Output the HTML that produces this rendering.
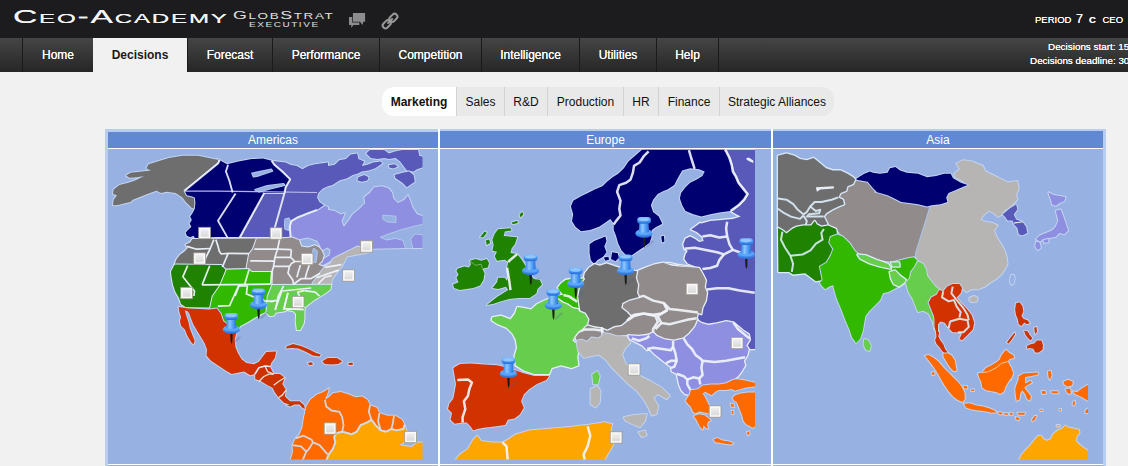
<!DOCTYPE html>
<html>
<head>
<meta charset="utf-8">
<title>CEO-Academy GlobStrat Executive</title>
<style>
html,body{margin:0;padding:0;}
body{width:1128px;height:466px;overflow:hidden;background:#f1f1f1;font-family:"Liberation Sans",Arial,sans-serif;position:relative;}
#top{position:absolute;left:0;top:0;width:1128px;height:38px;background:#1c1c1e;}
#logo{text-shadow:0 0.4px 0 #f4f4f4;position:absolute;left:13px;top:6px;color:#f4f4f4;font-size:18.7px;line-height:22px;letter-spacing:1px;white-space:nowrap;transform-origin:0 50%;transform:scaleX(1.8);}
#logo small{font-size:13.4px;}
#logo2{position:absolute;left:233px;top:8.5px;color:#e0e0e0;font-size:11px;line-height:13px;letter-spacing:1px;white-space:nowrap;transform-origin:0 50%;transform:scaleX(1.62);}
#logo2 small{font-size:8.3px;}
#logo3{position:absolute;left:249px;top:21px;color:#e0e0e0;font-size:6.5px;line-height:8px;letter-spacing:1px;white-space:nowrap;transform-origin:0 50%;transform:scaleX(1.54);}
#period{text-shadow:0 0 0.5px #fff;position:absolute;left:1035px;top:13.600px;color:#fff;font-size:9.5px;line-height:12px;white-space:nowrap;}
#period span{position:absolute;top:0}
#period b{font-size:12.5px;font-weight:normal;position:absolute;top:-1px;left:41px}
#period .c{font-size:9.5px;font-weight:bold;left:54px}
#nav{position:absolute;left:0;top:38px;width:1128px;height:34px;background:linear-gradient(#454545,#262626);}
#nav a{position:absolute;top:0;height:34px;line-height:34px;color:#fff;font-size:12px;text-align:center;text-decoration:none;border-left:1px solid #1a1a1a;box-sizing:border-box;text-shadow:0 0 0.5px #fff;}
#nav a.on{background:#f1f1f1;color:#1a1a1a;font-weight:bold;text-shadow:none;border-left:none}
#dl{position:absolute;left:0;top:40px;color:#fff;font-size:9.9px;line-height:14px;white-space:nowrap;text-shadow:0 0 0.6px #fff;}
#dl div{position:absolute;}
#tabs{position:absolute;left:382px;top:87px;height:29px;width:452px;border-radius:12px;background:#e9e9e9;overflow:hidden;}
#tabs span{position:absolute;top:0;height:29px;line-height:31px;font-size:12px;color:#111;text-align:center;border-left:1px solid #d2d2d2;box-sizing:border-box;}
#tabs span.on{background:#fff;font-weight:bold;border-left:none;}
#panel{position:absolute;left:105px;top:129px;width:1001px;height:340px;background:#b9ceee;}
.hd{position:absolute;top:3px;height:16px;background:#6189d3;color:#fff;font-size:12px;line-height:16px;text-align:center;}
.sea{position:absolute;top:20px;height:320px;background:#96b1e2;}
.wl{position:absolute;background:#fff;}
svg{position:absolute;left:0;top:0;}
</style>
</head>
<body>
<div id="top">
 <div id="logo">C<small>EO</small>-A<small>CADEMY</small></div>
 <div id="logo2">G<small>LOB</small>S<small>TRAT</small></div>
 <div id="logo3">EXECUTIVE</div>
 <svg width="70" height="38" style="left:340px;top:0" viewBox="340 0 70 38">
  <path d="M349 17h10.300v8.100h-6l-2 2.900v-2.900h-2.300z" fill="#8c8c8e"/>
  <path d="M352.200 12.300h13.600v10.100h-2.500v3.300l-3.300-3.300h-7.800z" fill="#1c1c1e"/>
  <path d="M352.900 13h12.200v8.700h-1.800l-0.800 3.200l-2.500-3.200h-7.100z" fill="#8c8c8e"/>
  <g fill="none" stroke="#979797" stroke-width="2">
   <rect x="-4.500" y="-2.800" width="9" height="5.600" rx="2.800" transform="translate(393.400,17.800) rotate(-45)"/>
   <rect x="-4.500" y="-2.800" width="9" height="5.600" rx="2.800" transform="translate(386.700,24.300) rotate(-45)"/>
   <path d="M388 23.100L392.200 19" stroke-linecap="round" stroke="#a0a0a0" stroke-width="1.800"/>
  </g>
 </svg>
 <div id="period"><span style="left:0">PERIOD</span><b>7</b><span class="c">C</span><span style="left:67.500px">CEO</span></div>
</div>
<div id="nav">
 <a style="left:22px;width:71px">Home</a>
 <a class="on" style="left:93px;width:94px">Decisions</a>
 <a style="left:187px;width:85px">Forecast</a>
 <a style="left:272px;width:107px">Performance</a>
 <a style="left:379px;width:102px">Competition</a>
 <a style="left:481px;width:98px">Intelligence</a>
 <a style="left:579px;width:77px">Utilities</a>
 <a style="left:656px;width:62px">Help</a>
 <a style="left:718px;width:2px"></a>
</div>
<div id="dl"><div style="top:0;left:1048px">Decisions start: 15</div><div style="top:14px;left:1030px">Decisions deadline: 30</div></div>
<div id="tabs">
 <span class="on" style="left:0;width:74px">Marketing</span>
 <span style="left:74px;width:48px">Sales</span>
 <span style="left:122px;width:43px">R&amp;D</span>
 <span style="left:165px;width:76px">Production</span>
 <span style="left:241px;width:35px">HR</span>
 <span style="left:276px;width:61px">Finance</span>
 <span style="left:337px;width:115px">Strategic Alliances</span>
</div>
<div id="panel">
 <div class="hd" style="left:3px;width:330px">Americas</div>
 <div class="hd" style="left:335px;width:331px;top:2px;height:17px;line-height:18px">Europe</div>
 <div class="hd" style="left:668px;width:330px;top:2px;height:17px;line-height:18px">Asia</div>
 <div class="sea" style="left:3px;width:330px"></div>
 <div class="sea" style="left:335px;width:331px"></div>
 <div class="sea" style="left:668px;width:330px"></div>
 <div class="wl" style="left:3px;top:19px;width:995px;height:1px"></div>
 <div class="wl" style="left:333px;top:0;width:2px;height:340px"></div>
 <div class="wl" style="left:666px;top:0;width:2px;height:340px"></div>
 <div class="wl" style="left:3px;top:335px;width:995px;height:1px"></div>
</div>
<svg id="map" width="1128" height="466" viewBox="0 0 1128 466">
<defs>
<clipPath id="cA"><rect x="108" y="149" width="314.500" height="310.500"/></clipPath>
<clipPath id="cE"><rect x="440" y="149" width="315" height="310.500"/></clipPath>
<clipPath id="cS"><rect x="773" y="149" width="315" height="310.500"/></clipPath>
<linearGradient id="mk" x1="0" y1="0" x2="0" y2="1"><stop offset="0" stop-color="#efefef"/><stop offset="1" stop-color="#d9d9d9"/></linearGradient>
<radialGradient id="pg" cx="0.4" cy="0.3" r="0.8"><stop offset="0" stop-color="#9ccaff"/><stop offset="0.6" stop-color="#3d8ef0"/><stop offset="1" stop-color="#1f62c8"/></radialGradient>
</defs>
<defs><linearGradient id="pn" x1="0" y1="0" x2="1" y2="0"><stop offset="0" stop-color="#3b86ea"/><stop offset="0.35" stop-color="#8cc6ff"/><stop offset="0.7" stop-color="#4a98f6"/><stop offset="1" stop-color="#2c6fd6"/></linearGradient>
<linearGradient id="pf" x1="0" y1="0" x2="0" y2="1"><stop offset="0" stop-color="#7bbcff"/><stop offset="0.55" stop-color="#4594f5"/><stop offset="1" stop-color="#2a6cd4"/></linearGradient>
<g id="pin">
<path d="M0.300 -0.300L7 -7.500L10 -7L3.500 -1Z" fill="#55607a" fill-opacity="0.250"/>
<path d="M-1.400 -11L1.100 -11L0.900 -3L0 0L-0.900 -3Z" fill="#1c1c1c"/>
<ellipse cx="-0.200" cy="-14.600" rx="8.700" ry="4.400" fill="url(#pf)"/>
<ellipse cx="-0.200" cy="-15.700" rx="7.600" ry="2.900" fill="#5ca6fa"/>
<path d="M-4.700 -25.500L4.300 -25.500L4.900 -16.300C3 -14.800-3.300 -14.800-5.300 -16.300Z" fill="url(#pn)"/>
<rect x="-7" y="-31" width="13.700" height="6.800" rx="3.300" ry="3" fill="url(#pf)"/>
<ellipse cx="-0.400" cy="-28.600" rx="5.600" ry="1.800" fill="#8ec6ff"/>
</g></defs>
<g clip-path="url(#cA)">
<polygon points="218,163.6 218,159.1 219.8,160.3 198.1,155.8 182.4,155.8 168.8,158 159.8,160.7 148.6,164.3 146.3,168.2 150.8,170.4 141.8,171.5 130.5,172.7 126,175.6 129.4,177.8 137.3,177.2 144.1,176 135,180.5 128.3,182.8 119.3,185.1 113.6,189.6 113,194.1 117,195.2 113.6,199.7 113,205.3 118.1,204.9 126,203.1 130.5,202 132.8,199.7 141.8,196.3 147.4,194.1 156.4,190.7 161,192.9 166.6,191.8 175.6,192.9 182.4,197.4 185.7,202 189.1,205.3 191.8,208 194.8,208.7 195.4,203.1 194.8,197.4 191.4,196.3 186.9,195.2 184.6,190.7" fill="#6e6e6e" stroke="#c3d4f0" stroke-width="2" stroke-linejoin="round" paint-order="stroke"/>
<polygon points="317.1,209.8 323.9,205.3 328,207.1 328,209.8 334.8,211 340.4,214.3 344.9,213.2 341.5,221.1 343.8,226.7 348.3,221.1 352.8,214.3 359.5,208.7 365.2,203.1 364.1,197.4 369.7,192.9 374.2,187.3 382.1,186.2 388.8,188.4 392.2,192.9 393.3,198.6 397.9,203.1 404.6,199.7 408,195.2 410.2,200.8 412.5,207.6 417,214.3 423.8,216.6 423.8,248.1 406.9,248.1 373,248.7 368.9,252 361,247.5 357.6,246.4 350.9,249.8 344.1,253.2 337.4,256.5 332.9,258.8 328.3,262.2 322.7,265.1 317.1,264.4 319.3,261.1 323.8,258.8 329.5,255.4 330.6,249.8 327.2,247.5 321.6,250.9 319.3,249.8 320.5,246.4 317.1,240.8 308.1,237.4 300.2,239 299.1,240.3 292.3,237.4 287.8,238.1 290.6,237.6 289.7,226.7 291.2,221.1 296.9,217.7 308.1,213.2" fill="#8f8fe2" stroke="#c3d4f0" stroke-width="2" stroke-linejoin="round" paint-order="stroke"/>
<polygon points="423.8,224.5 413.6,226.7 402.4,229.7 391.1,233.5 381,237.3 386.6,239.6 395.6,238 403.5,240.3 405.7,248.1 412.5,248.1 410.2,239.1 414.8,233.5 423.8,234.6" fill="#96b1e2" stroke="#b9cbee" stroke-width="1.6" stroke-linejoin="round" paint-order="stroke"/>
<polygon points="383.2,215.5 395.6,216.6 395.6,222.2 387.7,221.6 383.2,218.9" fill="#96b1e2" stroke="#b9cbee" stroke-width="1.6" stroke-linejoin="round" paint-order="stroke"/>
<polygon points="271.6,160.7 276.6,161.4 285.6,162.5 290.1,164.8 296.9,165.9 302.5,169.3 308.1,165.9 314.9,164.3 328,162.5 328,165.9 334.8,164.8 339.3,160.3 346,159.1 350.5,154.6 357.3,153.5 358.4,159.1 364.1,161.4 361.8,165.9 367.4,164.8 373.1,162.5 381,161.4 382.1,163.6 375.3,168.2 368.6,170.4 361.8,171.5 357.3,173.8 352.8,174.9 347.2,178.3 339.3,180.5 332.5,185.1 328,186.2 328,186.2 322.8,188.4 318.3,192.9 317.1,197.4 319.4,202 323.9,205.3 317.1,209.8 308.1,213.2 296.9,217.7 291.2,221.1 289.7,226.7 290.6,238 239.4,238 264.2,192.9 284.5,192.9 285.6,187.3 290.1,179.4 287.9,177.2 282.2,171.5 274.3,164.8" fill="#5959b9" stroke="#c3d4f0" stroke-width="2" stroke-linejoin="round" paint-order="stroke"/>
<polygon points="358.4,177.2 364.1,174.9 368.6,177.2 367.4,180.5 361.8,181.7 357.3,180.5" fill="#5959b9" stroke="#c3d4f0" stroke-width="2" stroke-linejoin="round" paint-order="stroke"/>
<polygon points="366.3,153.5 369.7,150.1 384.3,150.1 388.8,153.5 395.6,151.3 402.4,150.1 418.1,150.1 419.3,155.8 423.8,156.9 423.8,167 417,169.3 413.6,171.5 406.9,170.4 403.5,165.9 400.1,161.4 395.6,158 388.8,159.1 384.3,158 377.6,159.1 370.8,158" fill="#5959b9" stroke="#c3d4f0" stroke-width="2" stroke-linejoin="round" paint-order="stroke"/>
<polygon points="394.5,174.9 402.4,172.7 409.1,171.5 413.6,174.9 414.8,181.7 411.4,183.9 406.9,187.3 402.4,182.8 395.6,178.3" fill="#5959b9" stroke="#c3d4f0" stroke-width="2" stroke-linejoin="round" paint-order="stroke"/>
<polygon points="388.8,165.2 394.5,164.3 397.9,166.6 393.3,168.4 389.3,167.5" fill="#5959b9" stroke="#c3d4f0" stroke-width="2" stroke-linejoin="round" paint-order="stroke"/>
<polygon points="285.1,219.3 289,218.4 290.6,223.4 288.3,230.1 285.1,229 284.7,224.5" fill="#96b1e2" stroke="#b9cbee" stroke-width="1.6" stroke-linejoin="round" paint-order="stroke"/>
<polygon points="184.6,190.7 218,163.6 219.8,160.3 227,164.3 238.3,161.4 251.8,159.1 263.1,158.5 271.6,160.7 274.3,164.8 282.2,171.5 287.9,177.2 290.1,179.4 285.6,187.3 284.5,192.9 264.2,192.9 239.4,238 218,238 198.1,238.7 194.8,238 193.6,235.8 190.2,237.3 186.9,235.8 185.7,232.4 188,230.1 191.4,226.7 189.6,223.4 191.8,220 190.2,216.6 192.5,213.2 194.8,208.7 195.4,203.1 194.8,197.4 191.4,196.3 186.9,195.2" fill="#000070" stroke="#c3d4f0" stroke-width="2" stroke-linejoin="round" paint-order="stroke"/>
<polygon points="252,173.3 271.4,169.3 272.5,171.1 259,175.6 253.4,176.7" fill="#96b1e2" stroke="#b9cbee" stroke-width="1.6" stroke-linejoin="round" paint-order="stroke"/>
<polygon points="255,189.8 267.3,185.7 283.6,183.7 284.7,185.3 269.4,188.9 259,191.8" fill="#96b1e2" stroke="#b9cbee" stroke-width="1.6" stroke-linejoin="round" paint-order="stroke"/>
<polyline points="184.6,191.1 218,191.1 317.1,192.5" fill="none" stroke="#c9c9ee" stroke-width="1.2" stroke-opacity="0.9" stroke-linejoin="round"/>
<polyline points="228.1,164.8 225.9,171.5 229.3,180.5 231.5,188.4 232.6,192.5" fill="none" stroke="#eef3fb" stroke-width="1.9" stroke-opacity="0.9" stroke-linejoin="round"/>
<polyline points="235.6,193.4 218,220.7 227.5,237.6" fill="none" stroke="#eef3fb" stroke-width="1.9" stroke-opacity="0.9" stroke-linejoin="round"/>
<polyline points="284.5,192.9 272.1,237.6" fill="none" stroke="#eef3fb" stroke-width="1.9" stroke-opacity="0.9" stroke-linejoin="round"/>
<polyline points="271.6,160.7 274.3,164.8 282.2,171.5 287.9,177.2 290.1,179.4 285.6,187.3 284.5,192.9" fill="none" stroke="#eef3fb" stroke-width="1.9" stroke-opacity="0.9" stroke-linejoin="round"/>
<polyline points="264.2,192.9 239.4,238" fill="none" stroke="#eef3fb" stroke-width="1.9" stroke-opacity="0.9" stroke-linejoin="round"/>
<polyline points="317.1,209.8 308.1,213.2 296.9,217.7 291.2,221.1 289.7,226.7 290.6,237.6" fill="none" stroke="#eef3fb" stroke-width="1.9" stroke-opacity="0.9" stroke-linejoin="round"/>
<polyline points="184.6,190.7 218,163.6 219.8,160.3" fill="none" stroke="#eef3fb" stroke-width="1.9" stroke-opacity="0.9" stroke-linejoin="round"/>
<polyline points="198.1,238.7 218,238 290.6,238" fill="none" stroke="#eef3fb" stroke-width="1.9" stroke-opacity="0.9" stroke-linejoin="round"/>
<polygon points="192.3,239 190,242.4 185.5,244.6 187.8,248 184.4,251.4 179.9,254.8 176.5,259.3 174.3,264.9 175.3,264.6 221.3,265 223.4,268.8 246.4,268.6 249.1,254 252.9,249.2 256.8,238.6" fill="#6e6e6e" stroke="#dde7f7" stroke-width="2" stroke-linejoin="round" paint-order="stroke"/>
<polygon points="256.8,238.6 252.9,249.2 249.1,254 246.4,268.6 249.5,269.1 251.6,271.9 272.2,272.1 271.5,284.2 270,285 312.6,284.7 312.6,283.2 316.7,277.7 322.2,270.1 325,266.7 330.6,263.3 323.8,266.7 318.2,264.4 322,261.1 323.8,255.4 322,250.9 319.3,247.5 314.8,245.3 308.1,247.5 301.3,246.4 299.1,240.3 292.3,237.4 279.9,238.5" fill="#928b8b" stroke="#dde7f7" stroke-width="2" stroke-linejoin="round" paint-order="stroke"/>
<polygon points="313.7,248.7 317.1,251.6 315.7,262.2 313,262.2 312.1,255.4" fill="#96b1e2" stroke="#b9cbee" stroke-width="1.6" stroke-linejoin="round" paint-order="stroke"/>
<polygon points="330.6,263.3 332.9,258.8 337.4,256.5 344.1,253.2 350.9,249.8 357.6,246.4 361,247.5 368.9,252 364.4,253.2 347,256.4 344.2,261.9 341.5,266.7 338.7,270.1 334.6,275.6 331.8,279.7 331.2,284.7 312.6,284.7 312.6,283.2 316.7,277.7 322.2,270.1 325,266.7" fill="#b7b4b4" stroke="#c3d4f0" stroke-width="2" stroke-linejoin="round" paint-order="stroke"/>
<polygon points="270,285 331.2,284.7 331.2,285.9 330.5,289.4 325,293.5 319.5,296.9 314,300.3 308.5,304.5 305,307.2 304.4,311.3 304.4,319 303.6,324.1 300.2,330 296.8,330 295.7,321.9 296.1,314.1 293.4,311.3 286.5,310 285.1,311.3 275.5,312.7 274.1,315.5 270,316.2 265.5,312 265.5,296 268.1,292.5 271.5,284.2" fill="#66cd4d" stroke="#dde7f7" stroke-width="2" stroke-linejoin="round" paint-order="stroke"/>
<polygon points="225.5,269.8 248.8,269.1 251.6,271.9 272.2,272.1 271.5,284.2 268.1,292.5 266.7,296 265.5,312 265.1,312.3 258.9,315.3 251.5,319.8 245.3,323.5 240.4,325.9 236.7,331.6 231.7,330.9 228,324.7 223.1,321 220.6,313.6 216.9,308.6 209.5,309.4 209.2,307.5 211.7,296 219.3,284.9" fill="#33b800" stroke="#dde7f7" stroke-width="2" stroke-linejoin="round" paint-order="stroke"/>
<polygon points="174.3,264.9 175.3,264.6 221.3,265 225.5,269.8 219.3,284.9 211.7,296 209.2,307.5 190,307.3 185.5,307.1 181,303.9 178.8,297.6 175.4,292 173.1,285.2 171.6,277.3 170.9,271.7" fill="#1f8200" stroke="#dde7f7" stroke-width="2" stroke-linejoin="round" paint-order="stroke"/>
<polygon points="178.6,306.9 188.5,308.6 209.5,309.4 216.9,308.6 220.6,313.6 223.1,321 228,324.7 231.7,330.9 236.7,331.6 234.7,339.5 235.4,346.9 237.9,353.1 241.6,359.3 246.5,363 254,364.2 258.9,361.7 262.6,356.8 266.3,351.9 276.2,351.4 274.9,358 271.2,363 270,366.7 265.1,366.2 258.9,367.9 255.2,374.1 250.2,375.3 244.1,371.6 237.9,372.8 231.7,374.1 225.6,370.4 218.1,365.4 210.7,360.5 206.5,355.6 207,349.4 204.6,343.2 200.9,337 197.2,330.9 193.5,324.7 191,318.5 189.3,313.6 187.3,311.1 184.8,310.4 186,314.8 188.5,322.2 189.8,328.4 192.2,334.6 194.7,340.7 193.5,344.4 191,342 187.3,335.8 184.8,329.6 181.1,325.9 179.9,321 181.1,317.3 179.4,312.3" fill="#d23200" stroke="#c3d4f0" stroke-width="2" stroke-linejoin="round" paint-order="stroke"/>
<polygon points="270,366.7 273.7,374.1 279.9,374.1 284.8,377.8 282.3,384 286,390.1 284.8,396.3 290,401.2 293,401.2 299.6,401.2 304.1,405.2 304.9,409.1 302.3,407.8 299.6,404.4 294.3,404.4 290.3,406.5 286.3,405.2 290,404.9 283.6,402.5 278.6,397.5 274.9,392.6 272.5,387.7 267.5,385.2 261.4,381.5 255.2,379 255.2,374.1 258.9,367.9 265.1,366.2" fill="#cc3300" stroke="#c3d4f0" stroke-width="2" stroke-linejoin="round" paint-order="stroke"/>
<polyline points="255.2,374.1 258.9,367.9 265.1,366.2 270,366.7" fill="none" stroke="#eef3fb" stroke-width="1.3" stroke-opacity="0.9" stroke-linejoin="round"/>
<polyline points="265.1,366.2 267.5,371.6 273.7,374.1" fill="none" stroke="#eef3fb" stroke-width="1.3" stroke-opacity="0.9" stroke-linejoin="round"/>
<polyline points="258.9,381.5 263.8,376.5 268.8,374.1 273.7,374.1" fill="none" stroke="#eef3fb" stroke-width="1.3" stroke-opacity="0.9" stroke-linejoin="round"/>
<polyline points="273.7,385.2 278.6,381.5 284.8,377.8" fill="none" stroke="#eef3fb" stroke-width="1.3" stroke-opacity="0.9" stroke-linejoin="round"/>
<polyline points="278.6,397.5 282.3,395.1 286,390.1" fill="none" stroke="#eef3fb" stroke-width="1.3" stroke-opacity="0.9" stroke-linejoin="round"/>
<polygon points="286.3,346.6 293,344 301,345.9 308.9,349.3 315.6,352.8 320.9,354.6 319.6,356.5 312.9,355.4 306.3,352 298.3,348.5 291.6,348 286.3,348.5" fill="#cc3300" stroke="#c3d4f0" stroke-width="2" stroke-linejoin="round" paint-order="stroke"/>
<polygon points="307.6,362.9 311.6,362.3 313.2,364.5 309.5,365.3" fill="#cc3300" stroke="#c3d4f0" stroke-width="2" stroke-linejoin="round" paint-order="stroke"/>
<polygon points="322.2,361.3 327.6,358.1 336.9,358.1 342.2,361.3 338.2,363.9 331.5,364.5 324.9,363.9" fill="#cc3300" stroke="#c3d4f0" stroke-width="2" stroke-linejoin="round" paint-order="stroke"/>
<polygon points="348.3,362.9 352.6,362.6 352.8,365 348.8,365" fill="#cc3300" stroke="#c3d4f0" stroke-width="2" stroke-linejoin="round" paint-order="stroke"/>
<polygon points="306.3,406.5 310.3,399.8 316.9,394.5 323.6,391.9 328.9,388.4 327.6,393.2 324.9,399.8 328.9,397.2 332.9,393.2 340.9,391.9 348.8,394.5 355.5,397.2 362.1,396.4 367.4,399.8 370.1,405.2 376.8,407.8 379.4,413.1 387.4,415.8 395.4,415.8 402,419.8 404.7,425.1 403.4,429.1 396.7,430.4 391.4,429.1 386.1,431.8 380.7,430.4 375.4,425.1 371.4,419.8 367.4,422.4 360.8,425.1 356.8,431.8 351.5,434.4 347.5,433.1 342.2,431.8 336.9,433.1 334.2,437.1 335.5,442.4 332.9,449 328.9,454.4 326.2,461 290.3,461 293,451.7 292.4,445.1 295.6,438.4 299.6,434.4 302.3,427.8 303.6,419.8 304.9,413.1" fill="#ff6a00" stroke="#c3d4f0" stroke-width="2" stroke-linejoin="round" paint-order="stroke"/>
<polygon points="326.2,461 328.9,454.4 332.9,449 335.5,442.4 334.2,437.1 336.9,433.1 342.2,431.8 347.5,433.1 351.5,434.4 356.8,431.8 360.8,425.1 367.4,422.4 371.4,419.8 375.4,425.1 380.7,430.4 386.1,431.8 391.4,429.1 396.7,430.4 403.4,429.1 404.7,425.1 406.8,431.8 407.9,438.4 403.4,442.4 399.4,445.1 404.7,445.9 411.3,446.9 415.3,444.3 418,442.4 424.6,442.4 424.6,461" fill="#ffa500" stroke="#c3d4f0" stroke-width="2" stroke-linejoin="round" paint-order="stroke"/>
<polyline points="326.2,461 328.9,454.4 332.9,449 335.5,442.4 334.2,437.1 336.9,433.1 342.2,431.8 347.5,433.1 351.5,434.4 356.8,431.8 360.8,425.1 367.4,422.4 371.4,419.8 375.4,425.1 380.7,430.4 386.1,431.8 391.4,429.1 396.7,430.4 403.4,429.1 404.7,425.1" fill="none" stroke="#cfe0f2" stroke-width="1.8" stroke-opacity="0.9" stroke-linejoin="round"/>
<polyline points="324.9,399.8 326.2,406.5 331.5,410.5 339.5,411.8 342.2,417.1 343.5,425.1 342.2,431.8" fill="none" stroke="#cfe0f2" stroke-width="1.8" stroke-opacity="0.9" stroke-linejoin="round"/>
<polyline points="370.1,405.2 368.8,411.8 371.4,419.8" fill="none" stroke="#cfe0f2" stroke-width="1.8" stroke-opacity="0.9" stroke-linejoin="round"/>
<polyline points="379.4,413.1 378.1,421.1 380.7,430.4" fill="none" stroke="#cfe0f2" stroke-width="1.8" stroke-opacity="0.9" stroke-linejoin="round"/>
<polyline points="394,415.8 392.7,423.8 391.4,429.1" fill="none" stroke="#cfe0f2" stroke-width="1.8" stroke-opacity="0.9" stroke-linejoin="round"/>
<polyline points="295.6,438.4 303.6,435.7 311.6,439.7 312.9,442.4 319.6,445.1 327.6,454.4" fill="none" stroke="#cfe0f2" stroke-width="1.8" stroke-opacity="0.9" stroke-linejoin="round"/>
<polyline points="292.4,445.1 301,446.4 306.3,451.7 302.3,461" fill="none" stroke="#cfe0f2" stroke-width="1.8" stroke-opacity="0.9" stroke-linejoin="round"/>
<polyline points="312.9,442.4 308.9,449 306.3,451.7" fill="none" stroke="#cfe0f2" stroke-width="1.8" stroke-opacity="0.9" stroke-linejoin="round"/>
<polyline points="213.8,239.6 210.3,248.5 205.5,258.1 204.9,263.9" fill="none" stroke="#eef3fb" stroke-width="1.7" stroke-opacity="0.95" stroke-linejoin="round"/>
<polyline points="187,246.4 196.6,249.2 210.3,248.5" fill="none" stroke="#eef3fb" stroke-width="1.7" stroke-opacity="0.95" stroke-linejoin="round"/>
<polyline points="215.8,239.6 217.9,245.7 219.3,251.2 221.3,254 228.2,253.3" fill="none" stroke="#eef3fb" stroke-width="1.7" stroke-opacity="0.95" stroke-linejoin="round"/>
<polyline points="228.2,253.3 249.1,253.7" fill="none" stroke="#eef3fb" stroke-width="1.7" stroke-opacity="0.95" stroke-linejoin="round"/>
<polyline points="228.2,253.3 222.4,267" fill="none" stroke="#eef3fb" stroke-width="1.7" stroke-opacity="0.95" stroke-linejoin="round"/>
<polyline points="279.7,238.9 277.7,248.5 274.9,257.4 273.6,266.4 271.5,273.2 270.8,284.2" fill="none" stroke="#eef3fb" stroke-width="1.7" stroke-opacity="0.95" stroke-linejoin="round"/>
<polyline points="254.3,249.2 277.7,249.2 291.4,249.6" fill="none" stroke="#eef3fb" stroke-width="1.7" stroke-opacity="0.95" stroke-linejoin="round"/>
<polyline points="250.2,260.9 274.9,261.1" fill="none" stroke="#eef3fb" stroke-width="1.7" stroke-opacity="0.95" stroke-linejoin="round"/>
<polyline points="249.1,269.4 244.7,284.2" fill="none" stroke="#eef3fb" stroke-width="1.7" stroke-opacity="0.95" stroke-linejoin="round"/>
<polyline points="202.1,284.9 270.8,284.2" fill="none" stroke="#eef3fb" stroke-width="1.7" stroke-opacity="0.95" stroke-linejoin="round"/>
<polyline points="239.2,284.9 235.1,296" fill="none" stroke="#eef3fb" stroke-width="1.7" stroke-opacity="0.95" stroke-linejoin="round"/>
<polyline points="187.7,265.7 182.9,276.7 191.1,287 194.5,291.1 193.9,296" fill="none" stroke="#eef3fb" stroke-width="1.7" stroke-opacity="0.95" stroke-linejoin="round"/>
<polyline points="209.7,265.7 202.1,284.9" fill="none" stroke="#eef3fb" stroke-width="1.7" stroke-opacity="0.95" stroke-linejoin="round"/>
<polyline points="291.4,249.9 290.7,257.4 294.9,261.5 302.4,261.5" fill="none" stroke="#eef3fb" stroke-width="1.7" stroke-opacity="0.95" stroke-linejoin="round"/>
<polyline points="274.9,257.4 290.7,257.4" fill="none" stroke="#eef3fb" stroke-width="1.7" stroke-opacity="0.95" stroke-linejoin="round"/>
<polyline points="273.6,266.4 289.4,266.4 291.4,263.6 294.9,261.5" fill="none" stroke="#eef3fb" stroke-width="1.7" stroke-opacity="0.95" stroke-linejoin="round"/>
<polyline points="300.4,265 298.3,271.9 296.9,277.3" fill="none" stroke="#eef3fb" stroke-width="1.7" stroke-opacity="0.95" stroke-linejoin="round"/>
<polyline points="289.4,266.4 288,273.2 292.8,280.1 293.5,284.2" fill="none" stroke="#eef3fb" stroke-width="1.7" stroke-opacity="0.95" stroke-linejoin="round"/>
<polyline points="309.3,265 306.5,273.2 305.2,278.7" fill="none" stroke="#eef3fb" stroke-width="1.7" stroke-opacity="0.95" stroke-linejoin="round"/>
<polyline points="293.5,284.2 301,278.7 310.7,278.7 320,273.2" fill="none" stroke="#eef3fb" stroke-width="1.7" stroke-opacity="0.95" stroke-linejoin="round"/>
<polyline points="325,267.4 341.5,264.6" fill="none" stroke="#eef3fb" stroke-width="1.7" stroke-opacity="0.95" stroke-linejoin="round"/>
<polyline points="316.7,277.7 330.5,272.9 338.7,270.1" fill="none" stroke="#eef3fb" stroke-width="1.7" stroke-opacity="0.95" stroke-linejoin="round"/>
<polyline points="318.1,283.9 325,277 331.8,275.6" fill="none" stroke="#eef3fb" stroke-width="1.7" stroke-opacity="0.95" stroke-linejoin="round"/>
<polyline points="283.7,285.9 278.2,296.2 275.5,310" fill="none" stroke="#eef3fb" stroke-width="1.7" stroke-opacity="0.95" stroke-linejoin="round"/>
<polyline points="287.9,292.8 283.7,310" fill="none" stroke="#eef3fb" stroke-width="1.7" stroke-opacity="0.95" stroke-linejoin="round"/>
<polyline points="304.4,290.7 315.3,292.1 319.5,296.2" fill="none" stroke="#eef3fb" stroke-width="1.7" stroke-opacity="0.95" stroke-linejoin="round"/>
<polyline points="297.5,292.1 304.4,290.7" fill="none" stroke="#eef3fb" stroke-width="1.7" stroke-opacity="0.95" stroke-linejoin="round"/>
<polyline points="282.4,291 311.2,288" fill="none" stroke="#eef3fb" stroke-width="1.7" stroke-opacity="0.95" stroke-linejoin="round"/>
<polyline points="270,301.7 276.9,300.3" fill="none" stroke="#eef3fb" stroke-width="1.7" stroke-opacity="0.95" stroke-linejoin="round"/>
<polyline points="297.5,292.1 299.5,296.2" fill="none" stroke="#eef3fb" stroke-width="1.7" stroke-opacity="0.95" stroke-linejoin="round"/>
<polyline points="305,307.2 286.5,310" fill="none" stroke="#eef3fb" stroke-width="1.7" stroke-opacity="0.95" stroke-linejoin="round"/>
<polyline points="239,285 229.6,305.7 217.8,306.2" fill="none" stroke="#eef3fb" stroke-width="1.7" stroke-opacity="0.95" stroke-linejoin="round"/>
<polyline points="239,285.8 247.4,286 246.4,293.9 253.3,296.8 259.2,298.8 264.2,299.8" fill="none" stroke="#eef3fb" stroke-width="1.7" stroke-opacity="0.95" stroke-linejoin="round"/>
<polyline points="264.2,300.8 274,301.3" fill="none" stroke="#eef3fb" stroke-width="1.7" stroke-opacity="0.95" stroke-linejoin="round"/>
<polyline points="281.9,290.9 275,309.7" fill="none" stroke="#eef3fb" stroke-width="1.7" stroke-opacity="0.95" stroke-linejoin="round"/>
<polyline points="287.9,292.9 283.9,308.7" fill="none" stroke="#eef3fb" stroke-width="1.7" stroke-opacity="0.95" stroke-linejoin="round"/>
<polyline points="283.9,308.7 303.7,309.7" fill="none" stroke="#eef3fb" stroke-width="1.7" stroke-opacity="0.95" stroke-linejoin="round"/>
</g>
<g clip-path="url(#cE)">
<polygon points="725,149.7 726.1,151.3 729.5,158 731.7,164.8 732.9,171.5 736.2,177.2 738.5,182.8 743,188.4 747.5,194.1 744.1,199.7 738.5,205.3 730.6,211 736.2,214.3 740.8,216.6 732.9,218.9 721.6,220 710.3,221.1 701.3,223.4 700.2,222.9 695.7,226.3 691.2,229.6 696.8,231.9 702.4,236.4 703.6,240.9 699.1,242 694.6,238.7 690.1,236.4 685.5,238.7 683.3,244.3 684.4,248.8 687.8,251.1 685.5,254.4 684.4,258.9 687.8,263.4 693.4,265.7 699.1,268 702.4,273.6 705.8,280.3 704.7,287.1 707,292.7 705.8,300.6 702.4,307.4 701.3,314.1 697.9,312.4 696.7,318.3 697.9,320.7 701.4,321.9 708.5,324.2 716.8,323.1 726.2,320.7 733.3,321.9 738,325.4 742.8,330.1 748.7,333.7 749.8,339.6 746.3,345.5 748.7,349 756.9,349 756.9,290 756.5,149.7" fill="#5959b9" stroke="#e6edf9" stroke-width="2.6" stroke-linejoin="round" paint-order="stroke"/>
<polygon points="745.9,158.5 748.6,157.6 753.1,160.3 753.6,163 750.9,162.1 747.5,160.3" fill="#e8eef8" stroke="none" stroke-width="0" stroke-linejoin="round" paint-order="stroke"/>
<polygon points="641.9,149.7 635.1,155.8 628.4,161.4 623.9,168.2 618.2,173.8 612.6,177.2 607,181.7 602.4,186.2 594.6,189.6 587.8,192.9 581,196.3 573.2,200.8 570.9,206.5 573.2,214.3 572,221.1 575.4,226.7 581,231.2 590.1,230.1 599.1,226.7 605.8,222.2 610.3,218.9 613.7,223.4 613.7,230.1 616,235.8 618.2,243.6 621.6,250.4 626,255 630.8,256 636.8,251.8 644.3,246.8 649.6,242.8 651.4,237.5 651.8,230 656,227 661,224.5 662.2,223.4 658.8,216.6 653.1,212.1 650.9,205.3 653.1,199.7 657.7,194.1 664,190.7 667.5,189.6 674.3,185.1 677.7,178.3 682.2,170.4 690.1,168.2 699.1,169.3 704.7,171.5 702.4,176 696.8,179.4 690.1,182.8 685.5,187.3 681,192.9 679.9,198.6 682.2,205.3 685.5,211 693.4,214.3 701.3,216.6 710.3,214.3 719.3,212.5 730.6,211 738.5,205.3 744.1,199.7 747.5,194.1 743,188.4 738.5,182.8 736.2,177.2 732.9,171.5 731.7,164.8 729.5,158 726.1,151.3 725,149.7" fill="#000070" stroke="#c3d4f0" stroke-width="2" stroke-linejoin="round" paint-order="stroke"/>
<polyline points="648.6,151.3 644.1,155.8 639.6,162.5 634,165.9 632.9,172.7 630.6,179.4 626.1,182.8 619.3,185.1 617.1,191.8 620.5,200.8 619.3,208.7 620.5,215.5 616,221.1 613.7,224.5" fill="none" stroke="#f2f6fc" stroke-width="2.5" stroke-opacity="0.9" stroke-linejoin="round"/>
<polyline points="688.9,150.1 691.2,158 693.4,164.8 694.6,168.8" fill="none" stroke="#f2f6fc" stroke-width="2.5" stroke-opacity="0.9" stroke-linejoin="round"/>
<polyline points="725,149.7 726.1,151.3 729.5,158 731.7,164.8 732.9,171.5 736.2,177.2 738.5,182.8 743,188.4 747.5,194.1 744.1,199.7 738.5,205.3 730.6,211" fill="none" stroke="#f2f6fc" stroke-width="2.5" stroke-opacity="0.9" stroke-linejoin="round"/>
<polygon points="589.6,244.3 594.1,240.9 599.8,238.7 605.4,236.4 606.5,240.9 604.3,246.5 606.5,252.2 603.2,256.7 597.5,260.1 594.1,264.1 590.8,260.1 589.6,253.3" fill="#000070" stroke="#c3d4f0" stroke-width="2" stroke-linejoin="round" paint-order="stroke"/>
<polygon points="603.8,257.4 608.3,256.7 609.2,259.6 605.4,260.7" fill="#000070" stroke="#c3d4f0" stroke-width="2" stroke-linejoin="round" paint-order="stroke"/>
<polygon points="612.2,252.2 617.8,253.3 618.9,257.8 615.5,261.2 611,258.9" fill="#000070" stroke="#c3d4f0" stroke-width="2" stroke-linejoin="round" paint-order="stroke"/>
<polygon points="661.2,236.4 663.9,235.8 664.4,241.4 662.1,242.5" fill="#000070" stroke="#c3d4f0" stroke-width="2" stroke-linejoin="round" paint-order="stroke"/>
<polygon points="498.1,229.3 510.5,228.2 511.6,230.4 504.8,231.5 503.7,236.1 517.2,237.2 515,243.9 511.6,248.4 510.5,253 517.2,254.1 521.7,259.7 525.1,265.3 529.6,274.4 534.1,278.9 539.8,280 542,284.5 537.5,289 536.4,293.5 529.6,298 518.4,298 509.3,299.1 500.3,301.4 493.6,303.7 486.8,305 497,296.9 502.6,293.5 508.2,290.1 506,286.8 498.1,289 492.4,287.9 497,282.2 498.1,277.7 504.8,277.7 507.1,281.1 508.2,274.4 507.1,267.6 508.2,262 504.8,259.7 497,260.8 494.7,256.3 497,251.8 492.4,250.7 493.6,245.1 492.4,239.4 494.7,233.8" fill="#1f8200" stroke="#c3d4f0" stroke-width="2" stroke-linejoin="round" paint-order="stroke"/>
<polygon points="457.5,268.7 464.3,266.5 468.8,267.6 471,264.2 469.9,260.8 475.5,259 481.2,260.8 486.8,259 489.1,263.1 487.9,267.6 482.3,268.7 484.6,273.2 483.4,280 480.1,285.6 473.3,287.9 466.5,289 459.8,290.1 454.1,287.9 453,284.5 458.6,282.2 456.4,277.7 458.6,274.4 456.4,271" fill="#1f8200" stroke="#c3d4f0" stroke-width="2" stroke-linejoin="round" paint-order="stroke"/>
<polygon points="480.1,237.2 484.6,231.5 486.8,232.7 483.4,237.2" fill="#1f8200" stroke="#c3d4f0" stroke-width="2" stroke-linejoin="round" paint-order="stroke"/>
<polygon points="485.7,240.6 489.1,239.4 490.2,242.8 486.8,245.1" fill="#1f8200" stroke="#c3d4f0" stroke-width="2" stroke-linejoin="round" paint-order="stroke"/>
<polygon points="511.6,222.5 517.2,220.7 517.9,223 512.7,224.3" fill="#1f8200" stroke="#c3d4f0" stroke-width="2" stroke-linejoin="round" paint-order="stroke"/>
<polygon points="519.5,214.6 522.4,211.7 523.3,214.6 520.6,217.6" fill="#1f8200" stroke="#c3d4f0" stroke-width="2" stroke-linejoin="round" paint-order="stroke"/>
<polyline points="517.2,254.1 510.5,259.7 508.2,262" fill="none" stroke="#f2f6fc" stroke-width="2.5" stroke-opacity="0.9" stroke-linejoin="round"/>
<polyline points="507.1,267.6 509.3,281.1 510.5,290.1" fill="none" stroke="#f2f6fc" stroke-width="2.5" stroke-opacity="0.9" stroke-linejoin="round"/>
<polyline points="469.9,260.8 475.5,265.3 481.2,264.2 482.3,268.7" fill="none" stroke="#7ab070" stroke-width="1" stroke-opacity="0.9" stroke-linejoin="round"/>
<polygon points="637,271.3 644.8,268 653.9,264.6 662.9,262.8 671.9,263.4 680.9,265.7 694,267.3 663,262.8 672,265.7 681,266.8 691.2,267.3 699.1,268 702.4,273.6 705.8,280.3 704.7,287.1 707,292.7 705.8,300.6 702.4,307.4 701.3,314.1 697.9,312.4 696.7,318.3 697.9,320.7 695.5,326.6 689.6,333.7 683.7,338.4 674.3,340.8 664.9,339.6 656.6,336 653.1,332.5 648.3,334.9 638.9,336 629.4,334.9 620,334.9 625.4,336.2 616.4,336.2 609.6,334 602.9,332.9 602.9,335.1 598.4,338.5 591.6,337.4 587.1,341.9 581.5,339.6 577,340.8 574.7,336.2 578.1,331.7 582.6,328.4 587.1,323.9 593.9,326.1 601.7,327.2 607.4,329.5 614.1,326.1 620.9,325 625.4,321.6 628.8,317.1 630.6,316.4 627.1,312.4 621.2,307.7 622.4,303 629.4,299.4 638.9,297.1 637,292.7 638.1,284.9 635.8,278.1" fill="#928b8b" stroke="#e6edf9" stroke-width="2.6" stroke-linejoin="round" paint-order="stroke"/>
<polygon points="594.1,264.1 599.8,265.7 606.5,263.4 613.3,265.7 620.1,268 629.1,270.2 637,271.3 635.8,278.1 638.1,284.9 637,292.7 638.9,297.1 629.4,299.4 622.4,303 621.2,307.7 627.1,312.4 630.6,316.4 628.8,317.1 625.4,321.6 620.9,325 614.1,326.1 607.4,329.5 601.7,327.2 593.9,326.1 587.1,323.9 588.2,319.3 584.8,313.7 579.2,311.5 578.1,304.7 577,296.8 578.1,290.1 580.3,283.3 583.7,278.8 584.8,273.2 589.3,267.5 595,264.1" fill="#6e6e6e" stroke="#e6edf9" stroke-width="2.6" stroke-linejoin="round" paint-order="stroke"/>
<polyline points="638.9,297.1 643.6,295.9 653.1,300.6 663.7,303 669.6,308.9 679,310.1 688.5,311.2 697.9,312.4" fill="none" stroke="#f2f6fc" stroke-width="2.5" stroke-opacity="0.9" stroke-linejoin="round"/>
<polyline points="663.7,303 667.2,310.1 661.3,313.6 653.1,314.8 643.6,313.6 634.2,314.8 630.6,316.4" fill="none" stroke="#f2f6fc" stroke-width="2.5" stroke-opacity="0.9" stroke-linejoin="round"/>
<polyline points="667.2,310.1 657.8,316 661.3,323.1 669.6,324.2 679,321.9 688.5,319.5 696.7,318.3" fill="none" stroke="#f2f6fc" stroke-width="2.5" stroke-opacity="0.9" stroke-linejoin="round"/>
<polyline points="643.6,313.6 655.4,316 657.8,321.9 653.1,329 653.1,332.5" fill="none" stroke="#f2f6fc" stroke-width="2.5" stroke-opacity="0.9" stroke-linejoin="round"/>
<polyline points="661.3,323.1 655.4,329" fill="none" stroke="#f2f6fc" stroke-width="2.5" stroke-opacity="0.9" stroke-linejoin="round"/>
<polyline points="627.1,320.7 634.2,316 643.6,313.6" fill="none" stroke="#f2f6fc" stroke-width="2.5" stroke-opacity="0.9" stroke-linejoin="round"/>
<polyline points="574.7,336.2 578.1,331.7 584.8,329.5 593.9,329.5 601.7,330.6 602.9,335.1" fill="none" stroke="#f2f6fc" stroke-width="2.5" stroke-opacity="0.9" stroke-linejoin="round"/>
<polyline points="601.7,327.2 602.9,332.9" fill="none" stroke="#f2f6fc" stroke-width="2.5" stroke-opacity="0.9" stroke-linejoin="round"/>
<polygon points="561.2,283.3 565.7,279.9 572.4,278.8 583.7,278.8 580.3,283.3 578.1,290.1 577,296.8 578.1,304.7 579.2,311.5 578.1,309.2 572.4,308.1 567.9,304.7 562.3,302.4 557.8,299.1 557.8,295.7 563.4,294.6 560.1,291.2 557.8,287.8" fill="#33b800" stroke="#e6edf9" stroke-width="2.6" stroke-linejoin="round" paint-order="stroke"/>
<polyline points="563.4,295 569.1,296.4 573.1,299.1 577.2,301.8" fill="none" stroke="#f2f6fc" stroke-width="2.5" stroke-opacity="0.9" stroke-linejoin="round"/>
<polygon points="548.8,299.1 557.8,299.1 562.3,302.4 567.9,304.7 572.4,308.1 578.1,309.2 579.2,311.5 584.8,313.7 588.2,319.3 587.1,323.9 582.6,328.4 578.1,331.7 574.7,336.2 572.4,340.8 577,344.1 578.1,350.9 577,359 577,356 578.3,365.3 571.7,367.9 561,365.3 551.7,367.9 549.1,374 534.4,374 523.8,370.6 515.8,365.3 514.5,356 517.1,348 515.8,340 515.8,339.8 512.4,333.4 506.7,327.7 497.3,324 491.6,320.2 492.4,317.2 501,315.7 510.5,319.4 515,313.4 517.3,307 523.7,308.1 531.2,309.6 536.9,304.3 544.4,300.6 552,297.5" fill="#66cd4d" stroke="#e6edf9" stroke-width="2.6" stroke-linejoin="round" paint-order="stroke"/>
<polygon points="453.3,367.9 460,363.9 470.6,363.4 483.9,364.5 497.2,365.3 502.5,366.6 515.8,370.6 523.8,373.2 534.4,375.9 549.1,375.9 546.4,379.9 537.1,383.9 529.1,389.2 523.8,394.5 521.1,401.2 523.8,407.8 519.8,414.5 514.5,418.5 507.8,419.8 505.2,425.1 494.5,426.4 483.9,427.8 477.2,429.1 473.3,430.4 470.6,426.4 466.6,422.4 462.6,422.4 454.6,423.8 450.6,419.8 452,413.1 448,409.1 449.3,403.8 453.3,398.5 454.6,391.9 456,383.9 454.6,375.9" fill="#d23200" stroke="#c3d4f0" stroke-width="2" stroke-linejoin="round" paint-order="stroke"/>
<polyline points="457.3,379.9 467.9,379.4 471.9,382.6 469.3,389.2 467.9,395.9 463.9,401.2 465.3,409.1 462.6,417.1 462.6,422.4" fill="none" stroke="#f2f6fc" stroke-width="2.5" stroke-opacity="0.9" stroke-linejoin="round"/>
<polygon points="454.6,461 460,454.4 467.9,449 473.3,439.7 477.2,435.7 481.2,441.1 491.9,442.4 502.5,442.4 507.8,439.7 515.8,434.4 529.1,430.4 545.1,429.1 561,427.8 574.3,426.4 585,425.1 584,425.5 593.9,423.9 603.8,422.2 612.1,423.9 610.4,432.1 615.4,438.7 612.1,447 607.1,455.2 603.8,461.8 584,461.8" fill="#ffa500" stroke="#c3d4f0" stroke-width="2" stroke-linejoin="round" paint-order="stroke"/>
<polyline points="502.5,442.4 506.5,446.4 507.8,461" fill="none" stroke="#f2f6fc" stroke-width="2.5" stroke-opacity="0.9" stroke-linejoin="round"/>
<polyline points="587.6,426.4 590.3,435.7 587.6,446.4 583.6,454.4 585,461" fill="none" stroke="#f2f6fc" stroke-width="2.5" stroke-opacity="0.9" stroke-linejoin="round"/>
<polygon points="577,344.1 577,340.8 581.5,339.6 587.1,341.9 591.6,337.4 598.4,338.5 602.9,335.1 602.9,332.9 609.6,334 616.4,336.2 625.4,336.2 626.9,337.1 630.2,343 625.3,348 622,354.6 625.3,362.8 630.2,369.4 640.1,376 650,381 661.6,387.6 669.8,395.8 666.5,399.1 658.3,394.2 653.3,397.5 658.3,405.7 656.6,414 651.7,415.6 648.4,407.4 643.4,399.1 636.8,390.9 628.6,384.3 620.3,376 612.1,367.8 605.5,359.5 598.9,354.6 590.6,356.2 584,357.9 578.1,350.9" fill="#b7b4b4" stroke="#c3d4f0" stroke-width="2" stroke-linejoin="round" paint-order="stroke"/>
<polygon points="623.6,417.3 633.5,415 646.7,414 645.1,420.6 640.1,427.2 631.9,423.9 625.3,420.6" fill="#b7b4b4" stroke="#c3d4f0" stroke-width="2" stroke-linejoin="round" paint-order="stroke"/>
<polygon points="638.5,432.1 645.1,430.5 646.7,435.4 641.8,437.1" fill="#b7b4b4" stroke="#c3d4f0" stroke-width="2" stroke-linejoin="round" paint-order="stroke"/>
<polygon points="590.6,389.2 597.2,385.9 600.5,390.9 599.8,402.4 595.6,407.4 590.6,404.1" fill="#b7b4b4" stroke="#c3d4f0" stroke-width="2" stroke-linejoin="round" paint-order="stroke"/>
<polygon points="592.3,374.4 597.2,371.1 599.8,376 597.9,384.3 593.2,384.3" fill="#66cd4d" stroke="#c3d4f0" stroke-width="2" stroke-linejoin="round" paint-order="stroke"/>
<polygon points="697.9,320.7 701.4,323.1 708.5,324.9 716.8,323.5 726.2,321.2 733.3,322.6 738,326.6 742.8,330.6 748.7,334.4 749.8,339.6 746.3,345.5 748.7,349 747.5,354.9 743.9,360.8 745.1,365.5 741.6,371.4 738,376.2 733.3,379.7 726.2,383.2 719.2,384.4 710.9,384.4 702.6,385.6 697.9,389.2 690.8,390.3 689.6,395.1 684.9,393.9 681.4,390.3 679,384.4 677.8,378.5 676.7,373.8 671.9,371.4 670.8,366.7 666,363.2 660.1,358.5 654.2,353.7 649.5,349 647.1,350.2 642.4,345.5 637.7,343.1 633,340.8 629.4,338.4 628.3,335.3 638.9,336 648.3,334.9 653.1,332.5 656.6,336 664.9,339.6 674.3,340.8 683.7,338.4 689.6,333.7 695.5,326.6" fill="#8f8fe2" stroke="#e6edf9" stroke-width="2.6" stroke-linejoin="round" paint-order="stroke"/>
<polyline points="631.8,338.4 638.9,340.8 646,338.4 649.5,336" fill="none" stroke="#f2f6fc" stroke-width="2.5" stroke-opacity="0.9" stroke-linejoin="round"/>
<polyline points="647.1,349 653.1,347.8 662.5,349 670.8,350.2 673.1,346.7" fill="none" stroke="#f2f6fc" stroke-width="2.5" stroke-opacity="0.9" stroke-linejoin="round"/>
<polyline points="673.1,340.8 673.1,346.7 675.5,353.7 676.7,360.8 674.3,366.7 670.8,367.9" fill="none" stroke="#f2f6fc" stroke-width="2.5" stroke-opacity="0.9" stroke-linejoin="round"/>
<polyline points="683.7,338.4 687.3,344.3 692,349 695.5,354.9 700.3,358.5 702.6,360.8" fill="none" stroke="#f2f6fc" stroke-width="2.5" stroke-opacity="0.9" stroke-linejoin="round"/>
<polyline points="702.6,360.8 714.4,362 726.2,360.8 738,358.5 745.1,357.3" fill="none" stroke="#f2f6fc" stroke-width="2.5" stroke-opacity="0.9" stroke-linejoin="round"/>
<polyline points="702.6,360.8 701.4,367.9 702.6,375 699.1,378.5" fill="none" stroke="#f2f6fc" stroke-width="2.5" stroke-opacity="0.9" stroke-linejoin="round"/>
<polyline points="687.3,379.7 693.2,377.3 699.1,378.5 700.3,384.4" fill="none" stroke="#f2f6fc" stroke-width="2.5" stroke-opacity="0.9" stroke-linejoin="round"/>
<polyline points="676.7,373.8 683.7,376.2 687.3,379.7 687.3,384.4 690.8,390.3" fill="none" stroke="#f2f6fc" stroke-width="2.5" stroke-opacity="0.9" stroke-linejoin="round"/>
<polyline points="666,363.2 670.8,360.8 676.7,360.8" fill="none" stroke="#f2f6fc" stroke-width="2.5" stroke-opacity="0.9" stroke-linejoin="round"/>
<polyline points="733.3,322.6 738,329 745.1,334.9 749.8,338.4" fill="none" stroke="#f2f6fc" stroke-width="2.5" stroke-opacity="0.9" stroke-linejoin="round"/>
<polyline points="702.4,236.4 710.3,235.3 719.3,237.5 727.2,236.4" fill="none" stroke="#f2f6fc" stroke-width="2.5" stroke-opacity="0.9" stroke-linejoin="round"/>
<polyline points="727.2,221.8 726.1,228.5 727.2,236.4 729.5,244.3 732.9,249.9" fill="none" stroke="#f2f6fc" stroke-width="2.5" stroke-opacity="0.9" stroke-linejoin="round"/>
<polyline points="684.4,248.8 694.6,247.7 705.8,249.9 717.1,252.2 723.9,254.4 732.9,249.9" fill="none" stroke="#f2f6fc" stroke-width="2.5" stroke-opacity="0.9" stroke-linejoin="round"/>
<polyline points="723.9,254.4 719.3,260.1 717.1,265.7 710.3,268 702.4,269.1" fill="none" stroke="#f2f6fc" stroke-width="2.5" stroke-opacity="0.9" stroke-linejoin="round"/>
<polyline points="732.9,249.9 739.6,252.2 744.1,253.3" fill="none" stroke="#f2f6fc" stroke-width="2.5" stroke-opacity="0.9" stroke-linejoin="round"/>
<polyline points="707,289.4 717.1,288.2 728.4,288.2 739.6,290.5 754.7,292.7" fill="none" stroke="#f2f6fc" stroke-width="2.5" stroke-opacity="0.9" stroke-linejoin="round"/>
<polygon points="689.6,395.1 690.8,390.3 697.9,389.2 702.6,385.6 710.9,384.4 719.2,384.4 726.2,383.2 733.3,379.7 738,379.2 747.5,380.9 756.9,383.2 756.8,386.3 747.8,387.2 740.6,389 735.2,390.8 731.5,389 726.1,389.9 718.9,389.9 715.3,391.7 711.7,395.3 708.1,393.5 705.4,391.7 702.7,393.5 705.4,398 708.1,403.4 709.9,407.1 709,413.4 704.5,412.5 699.1,411.6 695.5,413.4 692.8,411.6 691,407.1 688.3,404.3 685.6,400.7 689.2,395.3" fill="#ff6a00" stroke="#c3d4f0" stroke-width="2" stroke-linejoin="round" paint-order="stroke"/>
<polygon points="693.7,416.1 699.1,414.3 704.5,415.2 708.1,417.9 710.8,420.6 708.1,421.5 707.2,425.1 708.1,428.7 705.4,427.8 703.6,425.1 702.7,429.6 700,426.9 698.2,423.3 696.4,419.7" fill="#ff6a00" stroke="#c3d4f0" stroke-width="2" stroke-linejoin="round" paint-order="stroke"/>
<polygon points="713.5,439.5 717.1,438.1 722.5,440.4 727.9,441.3 733.4,443.1 731.5,444.6 726.1,444 719.8,442.8 715.3,442.2" fill="#ff6a00" stroke="#c3d4f0" stroke-width="2" stroke-linejoin="round" paint-order="stroke"/>
<polygon points="732.4,398 735.2,395.3 740.6,393.5 747.8,392.6 756.8,392.6 756.8,426 752.3,427.8 749.6,426 746,424.2 743.3,420.6 742.4,416.1 740.6,411.6 738.8,407.1 737,402.5 734.3,400.7" fill="#ff6a00" stroke="#c3d4f0" stroke-width="2" stroke-linejoin="round" paint-order="stroke"/>
<polygon points="730.6,403.4 733.4,404.3 734.3,407.1 731.5,406.7" fill="#ff6a00" stroke="#c3d4f0" stroke-width="2" stroke-linejoin="round" paint-order="stroke"/>
<polygon points="731.5,410.7 733.4,411 733.4,414.3 731.9,413.9" fill="#ff6a00" stroke="#c3d4f0" stroke-width="2" stroke-linejoin="round" paint-order="stroke"/>
<polygon points="746.9,431.9 749.2,431.4 749.6,434.1 747.8,435.2" fill="#ff6a00" stroke="#c3d4f0" stroke-width="2" stroke-linejoin="round" paint-order="stroke"/>
</g>
<g clip-path="url(#cS)">
<polygon points="929.3,207.1 931.6,205.3 940.6,204.2 947.4,202 946.2,197.4 948.5,192.9 954.1,190.7 962,187.3 967.6,185.1 962,180.5 955.2,177.2 954.1,173.8 959.8,169.3 956.4,163.6 963.1,160.3 972.1,161.4 983,165.9 985.3,171.2 992.8,174.9 1000.2,178.6 1007.6,182.3 1017.4,181.1 1018.7,188.5 1016.2,194.7 1017.4,199.6 1013.7,203.3 1010,207 1003.9,210.7 1002.6,214.4 997.7,216.9 994,213.2 989,210.7 984.1,214.4 980.4,219.4 985.3,221.8 992.8,223.1 997.7,225.5 994,230.5 996.5,236.7 1000.2,242.8 1003.9,249 1006.3,255.2 1007.6,264.1 1006.3,266.5 1002.3,273.2 996.9,278.6 990.2,282.6 984.9,286.6 978.2,289.3 971.5,289.3 966.1,292 962.1,288 959.4,284 952.7,284 947.3,286.6 943.3,290.7 939.3,289.3 935.3,286.6 931.3,281.3 927.2,275.9 925.9,269.2 923.2,263.9 917.9,261.2 915.2,255.8 914.7,254" fill="#b7b4b4" stroke="#c3d4f0" stroke-width="2" stroke-linejoin="round" paint-order="stroke"/>
<polygon points="855.2,179.4 860.9,177.2 867.6,181.7 873.3,188.4 876.7,191.8 883,192.9 875.3,191.8 879.8,192.9 887.6,195.2 894.4,198.6 901.2,202 909.1,203.1 918.1,204.2 927.1,206.5 929.3,207.1 914.7,254 915.2,255.8 913.8,257.2 907.1,258.5 896.4,261.2 883,261.7 891,263.3 877.6,260.6 866.8,255.8 858.8,254.5 854.8,251 849.4,242.9 842.7,236.5 836,229 833.8,227.9 828.2,225.6 826,221.1 823.7,216.6 826,213.2 831.6,209.8 838.3,206.5 844,204.2 842.9,199.7 838.3,197.4 840.6,192.9 846.2,190.7 847.4,186.2 853,183.9" fill="#928b8b" stroke="#a9c3ea" stroke-width="2" stroke-linejoin="round" paint-order="stroke"/>
<polygon points="855.2,179.4 859.8,176.5 864.3,173.8 869.9,171.5 873,172.7 879.8,173.8 887.6,172.7 889.9,168.2 895.5,167 900,170.4 906.8,172.7 918.1,173.8 927.1,177.2 936.1,176 944,173.8 950.7,173.8 953,178.3 960.9,182.8 967.6,185.1 962,187.3 954.1,190.7 948.5,192.9 946.2,197.4 947.4,202 940.6,204.2 931.6,205.3 927.1,206.5 918.1,204.2 909.1,203.1 901.2,202 894.4,198.6 887.6,195.2 879.8,192.9 875.3,191.8 876.7,191.8 873.3,188.4 867.6,181.7" fill="#000070" stroke="#c3d4f0" stroke-width="2" stroke-linejoin="round" paint-order="stroke"/>
<polygon points="778,155.8 786.5,153.5 794.4,155.8 800,159.1 806.8,160.3 813.6,158 819.2,162.5 826,168.2 832.7,170.4 840.6,170.4 847.4,173.8 853,177.2 855.2,179.4 853,183.9 847.4,186.2 846.2,190.7 840.6,192.9 838.3,197.4 842.9,199.7 844,204.2 838.3,206.5 831.6,209.8 826,213.2 823.7,216.6 826,221.1 828.2,225.6 821.4,226.7 816.9,224.5 814.7,221.1 811.3,225.6 803.4,225.6 796.7,226.7 792.2,229 786.5,233.5 782,230.1 778,227.9" fill="#6e6e6e" stroke="#d5e6f7" stroke-width="2.8" stroke-linejoin="round" paint-order="stroke"/>
<polygon points="815.8,187.3 833.8,186.2 833.8,188.4 820.3,189.6 816.9,191.8" fill="#e8eef8" stroke="none" stroke-width="0" stroke-linejoin="round" paint-order="stroke"/>
<polyline points="778,198.6 786.5,199.7 793.3,204.2 797.8,209.8 803.4,214.3 806.8,212.1 810.2,206.5 814.7,202 821.4,202 831.6,199.7 838.3,197.4" fill="none" stroke="#dcecf8" stroke-width="2" stroke-opacity="0.9" stroke-linejoin="round"/>
<polyline points="778,208.7 784.3,213.2 791,216.6 800,218.9 803.4,215.5" fill="none" stroke="#dcecf8" stroke-width="2" stroke-opacity="0.9" stroke-linejoin="round"/>
<polyline points="803.4,215.5 806.8,221.1 805.7,225.6" fill="none" stroke="#dcecf8" stroke-width="2" stroke-opacity="0.9" stroke-linejoin="round"/>
<polyline points="810.2,206.5 815.8,211 820.3,209.8 819.2,213.2 809.1,214.3 806.8,216.6 813.6,216.6 823.7,216.6" fill="none" stroke="#dcecf8" stroke-width="2" stroke-opacity="0.9" stroke-linejoin="round"/>
<polygon points="778,227.9 782,230.1 786.5,233.5 792.2,229 796.7,226.7 803.4,225.6 811.3,225.6 814.7,221.1 816.9,224.5 821.4,226.7 828.2,225.6 833.8,227.9 836,229 837.3,234.4 830.6,237 829.3,242.4 833.3,249.1 830.6,255.8 826.6,262.5 819.9,266.5 821.3,273.2 822.6,279.9 815.9,281.3 810.5,277.3 805.2,273.2 793.1,274.6 789.1,271.9 778.4,271.9" fill="#1f8200" stroke="#dcecf8" stroke-width="2.6" stroke-linejoin="round" paint-order="stroke"/>
<polyline points="782.4,231.7 781,239.7 785.1,247.8 790.4,255.8 793.1,263.9 791.8,271.9" fill="none" stroke="#dcecf8" stroke-width="2" stroke-opacity="0.9" stroke-linejoin="round"/>
<polyline points="790.4,255.8 802.5,254.5 810.5,250.4 815.9,243.7 822.6,239.7 821.3,233 823.9,229" fill="none" stroke="#dcecf8" stroke-width="2" stroke-opacity="0.9" stroke-linejoin="round"/>
<polygon points="830.6,237 837.3,234.4 842.7,236.5 849.4,242.9 854.8,251 858.8,254.5 866.8,255.8 877.6,260.6 891,263.3 896.4,261.2 907.1,258.5 913.8,257.2 917.9,261.2 915.2,266.5 911.2,271.9 909.8,278.6 905.8,282.6 901.8,279.9 899.1,286.6 893.7,289.3 888.4,292 883,293.3 880.2,300 874.9,305.4 869.5,310.8 865.5,316.1 864.2,322.8 862.8,330.9 860.1,338.9 856.1,342.9 852.1,337.6 849.4,329.5 845.4,320.2 841.4,309.4 837.3,300 834.7,292 833.3,285.3 829.3,286.6 825.3,289.3 821.3,285.3 819.9,282.6 822.6,279.9 821.3,273.2 819.9,266.5 826.6,262.5 830.6,255.8 833.3,249.1 829.3,242.4" fill="#33b800" stroke="#c3d4f0" stroke-width="2" stroke-linejoin="round" paint-order="stroke"/>
<polygon points="889.7,271.9 895.1,270.6 900.4,275.9 905.8,279.9 904.4,282.6 899.1,286.6 893.7,284 891,278.6" fill="#66cd4d" stroke="#dcecf8" stroke-width="2.6" stroke-linejoin="round" paint-order="stroke"/>
<polygon points="857.5,254.5 865.5,255.3 876.2,259.8 888.3,263.9 891,268.7 880.2,266.5 869.5,263.3 860.1,258.5" fill="#66cd4d" stroke="#dcecf8" stroke-width="2.6" stroke-linejoin="round" paint-order="stroke"/>
<polygon points="891,262.5 899.1,262.5 899.6,266.5 892.4,266.5" fill="#66cd4d" stroke="#dcecf8" stroke-width="2.6" stroke-linejoin="round" paint-order="stroke"/>
<polygon points="864.2,338.9 868.2,340.3 870.9,345.6 869.5,351 865.5,349.6 863.6,344.3" fill="#66cd4d" stroke="#c3d4f0" stroke-width="2" stroke-linejoin="round" paint-order="stroke"/>
<polygon points="917.9,261.2 923.2,263.9 925.9,269.2 927.2,275.9 931.3,281.3 935.3,286.6 939.3,289.3 936.6,294.7 931.3,297.4 928.6,302.7 931.3,309.4 933.9,316.1 934.5,320 935.9,327.7 936.5,331.6 934.5,329.7 933.2,324.8 932.6,320 932.6,321.5 928.6,313.5 923.2,310.8 917.9,312.1 915.2,305.4 912.5,298.7 908.5,292 905.8,282.6 909.8,278.6 911.2,271.9 915.2,266.5" fill="#66cd4d" stroke="#c3d4f0" stroke-width="2" stroke-linejoin="round" paint-order="stroke"/>
<polygon points="931.3,297.4 936.6,294.7 939.3,290.1 943.3,291.2 947.3,286.6 952.7,284 959.4,284 962.1,288 960.7,293.3 956.7,297.4 960.7,302.7 966.1,308.1 971.5,314.8 974.2,322.8 972.8,329.5 967.5,334.9 962.1,340.3 959.4,338.9 962.1,333.6 958.1,332.2 952.7,332.2 948.7,328.2 944.7,322.8 940.6,321.5 938,324.2 938,332.2 939.3,331.6 938.4,336.4 940.3,340.3 943.2,344.1 945.1,349 948,352.8 945.1,353.8 942.2,350.9 939.3,347 936.5,344.1 935.1,340.3 936.5,336.4 935.9,331.6 934.5,326.8 934.5,320 933.9,316.1 931.3,309.4 928.6,302.7" fill="#d23200" stroke="#c3d4f0" stroke-width="2" stroke-linejoin="round" paint-order="stroke"/>
<polyline points="943.3,291.2 942,297.4 948.7,301.4 954,300 956.7,306.7 960.7,312.1 959.4,317.5" fill="none" stroke="#dcecf8" stroke-width="2" stroke-opacity="0.9" stroke-linejoin="round"/>
<polyline points="952.7,286.6 951.4,293.3 956.7,300 963.4,308.1 967.5,314.8 968.8,320.2" fill="none" stroke="#dcecf8" stroke-width="2" stroke-opacity="0.9" stroke-linejoin="round"/>
<polyline points="950,321.5 959.4,318.8 967.5,320.2 968.8,326.9 963.4,332.2 958.1,332.2" fill="none" stroke="#dcecf8" stroke-width="2" stroke-opacity="0.9" stroke-linejoin="round"/>
<polyline points="948.7,328.2 950,321.5" fill="none" stroke="#dcecf8" stroke-width="2" stroke-opacity="0.9" stroke-linejoin="round"/>
<polygon points="969.5,297.7 974,295.9 977.7,297.7 976.8,301.4 972.2,302.3 969.5,300.5" fill="#b7b4b4" stroke="#c3d4f0" stroke-width="2" stroke-linejoin="round" paint-order="stroke"/>
<polygon points="1010.8,275.3 1013.8,274.6 1014.9,278.3 1013.8,283.6 1011.5,285.1 1009.7,281.3" fill="#96b1e2" stroke="#c9d8f2" stroke-width="1.6" stroke-linejoin="round" paint-order="stroke"/>
<polygon points="1002.6,214.4 1010,208.3 1016.2,204.6 1017.4,209.5 1013.7,214.4 1016.2,219.4 1022.4,221.8 1026.1,226.8 1027.3,233 1022.4,235.4 1018.7,234.2 1017.4,228 1013.7,224.3 1012.5,220.6 1007.6,220.6 1005.1,216.9" fill="#5959b9" stroke="#c3d4f0" stroke-width="2" stroke-linejoin="round" paint-order="stroke"/>
<polyline points="1013.7,223.1 1022.4,221.8" fill="none" stroke="#eef3fb" stroke-width="1.2" stroke-opacity="0.9" stroke-linejoin="round"/>
<polygon points="1048.3,192.2 1053.2,194.7 1059.4,195.9 1065.6,197.1 1064.4,200.9 1059.4,203.3 1055.7,205.8 1052,204.6 1050.8,199.6 1049.5,195.9" fill="#8f8fe2" stroke="#c3d4f0" stroke-width="2" stroke-linejoin="round" paint-order="stroke"/>
<polygon points="1055.7,210.7 1060.7,209.5 1063.1,215.7 1065.6,223.1 1068.1,230.5 1064.4,234.2 1059.4,233 1055.7,236.7 1049.5,237.9 1044.6,239.1 1039.7,241.6 1036,239.1 1039.7,235.4 1045.8,233 1052,230.5 1055.7,226.8 1058.2,220.6 1057,215.7" fill="#8f8fe2" stroke="#c3d4f0" stroke-width="2" stroke-linejoin="round" paint-order="stroke"/>
<polygon points="1036,241.6 1039.7,242.8 1040.9,247.8 1037.7,250.2 1035.2,246.5" fill="#8f8fe2" stroke="#c3d4f0" stroke-width="2" stroke-linejoin="round" paint-order="stroke"/>
<polygon points="1043.4,239.9 1048.3,239.1 1048.3,242.3 1044.1,242.8" fill="#8f8fe2" stroke="#c3d4f0" stroke-width="2" stroke-linejoin="round" paint-order="stroke"/>
<polygon points="1016,303.2 1019.6,302.3 1022.4,305.9 1023.3,311.4 1021.5,316 1023.3,318.7 1027.9,320.5 1029.7,323.3 1026.9,324.2 1024.2,322.4 1021.5,326 1018.7,324.2 1017.8,319.6 1016,315.1 1015.1,309.6" fill="#cc3300" stroke="#c3d4f0" stroke-width="2" stroke-linejoin="round" paint-order="stroke"/>
<polygon points="1024.2,330.6 1027.9,331.5 1029.7,335.1 1032.4,337.9 1030.6,340.6 1027.9,337.9 1025.1,334.2" fill="#cc3300" stroke="#c3d4f0" stroke-width="2" stroke-linejoin="round" paint-order="stroke"/>
<polygon points="1034.2,327.8 1036.4,326.9 1037,331.5 1035.2,334.2" fill="#cc3300" stroke="#c3d4f0" stroke-width="2" stroke-linejoin="round" paint-order="stroke"/>
<polygon points="1006.9,342.4 1009.6,338.8 1013.3,334.2 1014.5,332.4 1015.1,334.2 1012.3,338.8 1008.7,343.4" fill="#cc3300" stroke="#c3d4f0" stroke-width="2" stroke-linejoin="round" paint-order="stroke"/>
<polygon points="1026.9,346.1 1030.6,344.3 1034.2,343.4 1037,340.6 1041.5,340.6 1043,345.2 1042.5,349.7 1038.8,352.5 1035.2,352.5 1033.3,348.8 1029.7,347.9 1027.3,348.8" fill="#cc3300" stroke="#c3d4f0" stroke-width="2" stroke-linejoin="round" paint-order="stroke"/>
<polygon points="943.2,353.8 948,353.2 951.9,355.7 954.8,360.6 955.8,366.3 956.7,370.6 953.8,371.2 950.9,368.3 948,364.4 945.1,359.6 943.6,356.7" fill="#ff6a00" stroke="#c3d4f0" stroke-width="2" stroke-linejoin="round" paint-order="stroke"/>
<polygon points="924.9,355.7 928.7,355.1 933.6,357.7 938.4,361.5 943.2,367.3 948,372.1 952.9,377 957.7,381.8 961.6,386.6 964.5,392.4 964.8,399.2 962.5,402.1 957.7,400.1 952.9,396.3 948,390.5 944.2,384.7 940.3,377.9 936.5,371.2 932.6,365.4 928.7,360.6" fill="#ff6a00" stroke="#c3d4f0" stroke-width="2" stroke-linejoin="round" paint-order="stroke"/>
<polygon points="931.6,372.5 934.1,372.1 934.5,374.7 932.2,375" fill="#ff6a00" stroke="#c3d4f0" stroke-width="2" stroke-linejoin="round" paint-order="stroke"/>
<polygon points="963.5,385.7 967,386 967.4,388.6 964.1,388.6" fill="#ff6a00" stroke="#c3d4f0" stroke-width="2" stroke-linejoin="round" paint-order="stroke"/>
<polygon points="971.2,389.5 974.1,389.5 974.1,391.1 971.2,391.1" fill="#ff6a00" stroke="#c3d4f0" stroke-width="2" stroke-linejoin="round" paint-order="stroke"/>
<polygon points="964,403.7 969.8,403.3 976.4,405.6 983.1,406.5 989.8,408.4 994.6,410.4 996.5,412.3 991.7,412.8 985,411.3 978.4,410.4 971.7,409.4 965.9,407.5" fill="#ff6a00" stroke="#c3d4f0" stroke-width="2" stroke-linejoin="round" paint-order="stroke"/>
<polygon points="998.4,412.3 1002.2,412.6 1002.2,414.4 998.8,414.2" fill="#ff6a00" stroke="#c3d4f0" stroke-width="2" stroke-linejoin="round" paint-order="stroke"/>
<polygon points="1004.2,413.2 1008,413.2 1008,414.7 1004.5,414.7" fill="#ff6a00" stroke="#c3d4f0" stroke-width="2" stroke-linejoin="round" paint-order="stroke"/>
<polygon points="1009.9,412.8 1012.7,412.8 1012.7,414.7 1009.9,414.7" fill="#ff6a00" stroke="#c3d4f0" stroke-width="2" stroke-linejoin="round" paint-order="stroke"/>
<polygon points="1017.5,412.8 1025.2,412.8 1024.2,414.7 1018.5,414.7" fill="#ff6a00" stroke="#c3d4f0" stroke-width="2" stroke-linejoin="round" paint-order="stroke"/>
<polygon points="1015.6,417 1019.4,418 1018.5,420.5 1016.2,419.3" fill="#ff6a00" stroke="#c3d4f0" stroke-width="2" stroke-linejoin="round" paint-order="stroke"/>
<polygon points="1031.9,419.9 1034.7,416.1 1036.6,416.1 1034.7,419.9 1032.4,421.2" fill="#ff6a00" stroke="#c3d4f0" stroke-width="2" stroke-linejoin="round" paint-order="stroke"/>
<polygon points="1041.4,391.2 1045.2,390.7 1045.8,393.7 1042.4,394.1" fill="#ff6a00" stroke="#c3d4f0" stroke-width="2" stroke-linejoin="round" paint-order="stroke"/>
<polygon points="1051,391.2 1057.7,391.2 1058.6,393.2 1051.9,393.2" fill="#ff6a00" stroke="#c3d4f0" stroke-width="2" stroke-linejoin="round" paint-order="stroke"/>
<polygon points="1063.4,381.7 1068.2,379.8 1072.9,381.7 1072,385.5 1067.2,386.5 1064.3,384.6" fill="#ff6a00" stroke="#c3d4f0" stroke-width="2" stroke-linejoin="round" paint-order="stroke"/>
<polygon points="1065.3,389.3 1070.1,388.4 1071,393.2 1068.2,394.1" fill="#ff6a00" stroke="#c3d4f0" stroke-width="2" stroke-linejoin="round" paint-order="stroke"/>
<polygon points="1072.9,401.8 1074.9,400.8 1074.5,405.6 1072.6,405.2" fill="#ff6a00" stroke="#c3d4f0" stroke-width="2" stroke-linejoin="round" paint-order="stroke"/>
<polygon points="1085.4,410.4 1088.2,408.4 1088.2,413.2 1085.4,412.8" fill="#ff6a00" stroke="#c3d4f0" stroke-width="2" stroke-linejoin="round" paint-order="stroke"/>
<polygon points="1040.5,409.4 1042.4,409.4 1042.4,410.9 1040.5,410.9" fill="#ff6a00" stroke="#c3d4f0" stroke-width="2" stroke-linejoin="round" paint-order="stroke"/>
<polygon points="1059.6,409 1061.1,409 1061.1,410.5 1059.6,410.5" fill="#ff6a00" stroke="#c3d4f0" stroke-width="2" stroke-linejoin="round" paint-order="stroke"/>
<polygon points="1088.2,384.6 1082.5,388 1076.8,392.2 1072.9,391.2 1074.9,394.1 1080.6,396.4 1088.2,400.8" fill="#ff6a00" stroke="#c3d4f0" stroke-width="2" stroke-linejoin="round" paint-order="stroke"/>
<polygon points="1047.9,371.6 1050.7,370.7 1051.6,375.3 1049.8,380 1048.5,377.1" fill="#ff6a00" stroke="#c3d4f0" stroke-width="2" stroke-linejoin="round" paint-order="stroke"/>
<polygon points="1001.4,355.2 1006,349.7 1008.7,352.5 1013.3,355.2 1014.2,358 1009.6,358.9 1007.8,361.6 1011.4,368 1013.3,373.5 1010.5,380 1010.8,377.9 1008,382.6 1005.1,387.4 1004.2,391.2 1000.3,394.1 996.5,392.2 991.7,391.2 986,390.3 982.2,387.4 981.2,381.7 979.3,377.9 978.4,375 977.7,373.5 982.2,372.6 985.9,368 991.4,365.3 995.9,362.5 999.6,359.8" fill="#ff6a00" stroke="#c3d4f0" stroke-width="2" stroke-linejoin="round" paint-order="stroke"/>
<polyline points="982.2,372.6 988.6,371.6 995.9,368 1001.4,363.4 1007.8,361.6" fill="none" stroke="#ffd0a8" stroke-width="1" stroke-opacity="0.9" stroke-linejoin="round"/>
<polygon points="1018.7,376.2 1023.3,373.5 1030.6,373.1 1037.9,372.6 1037.9,374.4 1030.6,376.2 1025.1,377.1 1025.2,383.6 1030.9,380.7 1031.9,382.6 1027.1,385.5 1024.2,387.4 1028,392.2 1030.9,396 1029.9,400.8 1027.1,398.9 1025.2,394.1 1022.3,390.3 1020.4,393.2 1019.4,399.8 1016.6,400.8 1015.6,394.1 1015.2,388.4 1016.6,384.6 1018.5,379.8" fill="#ff6a00" stroke="#c3d4f0" stroke-width="2" stroke-linejoin="round" paint-order="stroke"/>
<polygon points="1018.5,461 1021.3,455.3 1025.2,450.5 1029.9,445.7 1033.8,440.9 1037.6,436.2 1041.4,435.8 1043.3,439 1047.1,440.9 1051,439 1052.9,434.2 1057.7,430.4 1062.4,428.5 1065.3,425.6 1068.2,427.6 1072.9,428.5 1078.7,429.5 1079.6,432.3 1076.8,436.2 1075.8,440.9 1079.6,444.7 1084.4,448.6 1088.2,450.5 1088.2,461" fill="#ffa500" stroke="#c3d4f0" stroke-width="2" stroke-linejoin="round" paint-order="stroke"/>
<polygon points="1056.7,425.1 1059.6,425.1 1059.6,426.6 1056.7,426.6" fill="#ffa500" stroke="#c3d4f0" stroke-width="2" stroke-linejoin="round" paint-order="stroke"/>
</g>
<g>
<rect x="198.7" y="227.3" width="11.800" height="11.400" fill="#fbfbfb" stroke="#9c978c" stroke-width="0.800"/><rect x="200.6" y="229.2" width="8" height="7.600" fill="url(#mk)"/>
<rect x="270.2" y="227.8" width="11.800" height="11.400" fill="#fbfbfb" stroke="#9c978c" stroke-width="0.800"/><rect x="272.1" y="229.7" width="8" height="7.600" fill="url(#mk)"/>
<rect x="193.7" y="252.8" width="11.800" height="11.400" fill="#fbfbfb" stroke="#9c978c" stroke-width="0.800"/><rect x="195.6" y="254.7" width="8" height="7.600" fill="url(#mk)"/>
<rect x="180.7" y="287.3" width="11.800" height="11.400" fill="#fbfbfb" stroke="#9c978c" stroke-width="0.800"/><rect x="182.6" y="289.2" width="8" height="7.600" fill="url(#mk)"/>
<rect x="301.2" y="253.3" width="11.800" height="11.400" fill="#fbfbfb" stroke="#9c978c" stroke-width="0.800"/><rect x="303.1" y="255.2" width="8" height="7.600" fill="url(#mk)"/>
<rect x="360.7" y="240.8" width="11.800" height="11.400" fill="#fbfbfb" stroke="#9c978c" stroke-width="0.800"/><rect x="362.6" y="242.7" width="8" height="7.600" fill="url(#mk)"/>
<rect x="342.7" y="269.8" width="11.800" height="11.400" fill="#fbfbfb" stroke="#9c978c" stroke-width="0.800"/><rect x="344.6" y="271.7" width="8" height="7.600" fill="url(#mk)"/>
<rect x="292.2" y="296.3" width="11.800" height="11.400" fill="#fbfbfb" stroke="#9c978c" stroke-width="0.800"/><rect x="294.1" y="298.2" width="8" height="7.600" fill="url(#mk)"/>
<rect x="324.2" y="422.8" width="11.800" height="11.400" fill="#fbfbfb" stroke="#9c978c" stroke-width="0.800"/><rect x="326.1" y="424.7" width="8" height="7.600" fill="url(#mk)"/>
<rect x="404.7" y="431.3" width="11.800" height="11.400" fill="#fbfbfb" stroke="#9c978c" stroke-width="0.800"/><rect x="406.6" y="433.2" width="8" height="7.600" fill="url(#mk)"/>
<g transform="translate(258.7,319.4)"><use href="#pin"/></g>
<g transform="translate(231.5,344.1)"><use href="#pin"/></g>
<rect x="686.2" y="283.3" width="11.800" height="11.400" fill="#fbfbfb" stroke="#9c978c" stroke-width="0.800"/><rect x="688.1" y="285.2" width="8" height="7.600" fill="url(#mk)"/>
<rect x="628.2" y="363.8" width="11.800" height="11.400" fill="#fbfbfb" stroke="#9c978c" stroke-width="0.800"/><rect x="630.1" y="365.7" width="8" height="7.600" fill="url(#mk)"/>
<rect x="610.2" y="431.8" width="11.800" height="11.400" fill="#fbfbfb" stroke="#9c978c" stroke-width="0.800"/><rect x="612.1" y="433.7" width="8" height="7.600" fill="url(#mk)"/>
<rect x="731.2" y="337.3" width="11.800" height="11.400" fill="#fbfbfb" stroke="#9c978c" stroke-width="0.800"/><rect x="733.1" y="339.2" width="8" height="7.600" fill="url(#mk)"/>
<rect x="709.2" y="405.8" width="11.800" height="11.400" fill="#fbfbfb" stroke="#9c978c" stroke-width="0.800"/><rect x="711.1" y="407.7" width="8" height="7.600" fill="url(#mk)"/>
<g transform="translate(644.2,248)"><use href="#pin"/></g>
<g transform="translate(746.4,269.2)"><use href="#pin"/></g>
<g transform="translate(530.8,285.4)"><use href="#pin"/></g>
<g transform="translate(625.8,285.4)"><use href="#pin"/></g>
<g transform="translate(575.8,298.5)"><use href="#pin"/></g>
<g transform="translate(553.5,320)"><use href="#pin"/></g>
<g transform="translate(508.6,388.3)"><use href="#pin"/></g>
</g>
</svg>
</body>
</html>
